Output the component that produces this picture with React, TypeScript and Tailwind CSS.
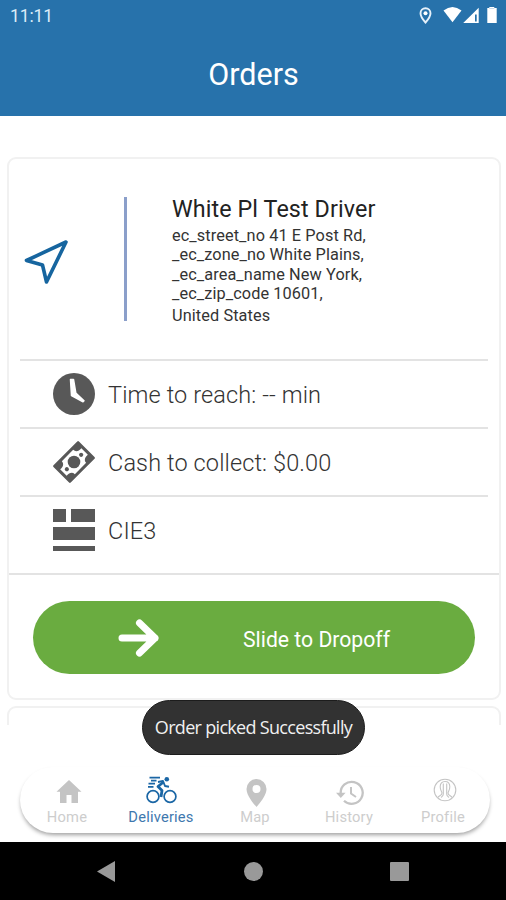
import type { ReactNode } from 'react';

const addressLines = [
  'ec_street_no 41 E Post Rd,',
  '_ec_zone_no White Plains,',
  '_ec_area_name New York,',
  '_ec_zip_code 10601,',
];

function StatusBar() {
  return (
    <div className="flex h-8 items-center justify-between pl-[10px] pr-[8px]">
      <span className="text-[17.5px] leading-8 tracking-[-0.1px] text-[#dcecf8]">11:11</span>
      <svg width="82" height="20" viewBox="0 0 82 20" fill="#fff">
        <path
          d="M9.500 2.200a5 5 0 0 0-5 5c0 3.700 5 9.300 5 9.300s5-5.600 5-9.300a5 5 0 0 0-5-5z"
          fill="none"
          stroke="#e6f1fa"
          strokeWidth="1.900"
        />
        <circle cx="9.500" cy="7.300" r="2" />
        <path d="M27.500 4.400Q36.500-2.600 45.500 4.400L36.500 16.200z" />
        <path fillRule="evenodd" d="M62.700 1.700V17H47.200zM59 8.500v7h1.700v-7z" />
        <path d="M73.300 2.200h5v-1.200h-5zM71.300 2h9.400v15h-9.400z" />
      </svg>
    </div>
  );
}

function ClockIcon() {
  return (
    <svg width="42" height="42" viewBox="0 0 42 42">
      <circle cx="21" cy="21" r="21" fill="#585858" />
      <path d="M17.500 6.500h3l2.300 13.500 8.200 7.800-1 1L18.500 22.700z" fill="#fff" stroke="#fff" strokeWidth="1.500" strokeLinejoin="round" />
    </svg>
  );
}

function CashIcon() {
  return (
    <svg width="42" height="42" viewBox="0 0 42 42">
      <g transform="rotate(-45 21 21)">
        <rect x="3" y="8.800" width="36" height="24.400" rx="1.200" fill="#585858" />
        <path
          d="M13 11.800h16c.2 3.500 3 5 7 4.600v9.200c-4-.4-6.800 1.100-7 4.600H13c-.2-3.500-3-5-7-4.600v-9.200c4 .4 6.800-1.100 7-4.600z"
          fill="#fff"
        />
        <circle cx="21" cy="21" r="6.300" fill="#585858" />
        <circle cx="10.900" cy="21" r="2.100" fill="#585858" />
        <circle cx="31.100" cy="21" r="2.100" fill="#585858" />
      </g>
    </svg>
  );
}

function BlocksIcon() {
  return (
    <svg width="42" height="42" viewBox="0 0 42 42" fill="#585858">
      <path d="M0 0h13v13H0zM18 0h24v13H18zM0 18h42v13H0zM0 37h42v5H0z" />
    </svg>
  );
}

function HomeIcon() {
  return (
    <svg className="ml-[4px]" width="26" height="23" viewBox="0 0 26 23" fill="#c4c4c4">
      <path d="M13 0L25.500 11.800H22V23h-6.500v-8h-5v8H4V11.800H.5z" />
    </svg>
  );
}

function BikeIcon() {
  return (
    <svg className="mb-[3px]" width="31" height="28" viewBox="0 0 31 28" fill="none" stroke="#1a66a5" strokeWidth="1.700">
      <circle cx="7" cy="20.500" r="5.900" />
      <circle cx="24" cy="20.500" r="5.900" />
      <path d="M3.500 1.700H14M5 4.700h5.500M2.500 7.700H9M2 10.800h5.500" />
      <path d="M17.500 6L12 10.500L16 14.500L15 21" strokeWidth="2.800" strokeLinejoin="round" />
      <path d="M12 6L17 5L19 10L23 10.800" strokeWidth="1.900" strokeLinejoin="round" />
      <circle cx="20.800" cy="3.300" r="2.300" fill="#1a66a5" stroke="none" />
    </svg>
  );
}

function MapIcon() {
  return (
    <svg className="ml-[3px] mt-[2px]" width="21" height="28" viewBox="0 0 21 28" fill="#c4c4c4">
      <path
        fillRule="evenodd"
        d="M10.500 0A10 10 0 0 0 .500 10C.5 17.500 10.500 28 10.500 28s10-10.500 10-18a10 10 0 0 0-10-10zm0 6a4 4 0 1 1 0 8 4 4 0 0 1 0-8z"
      />
    </svg>
  );
}

function HistoryIcon() {
  return (
    <svg className="ml-[2px] mt-[2px]" width="28" height="26" viewBox="0 0 28 26" fill="none" stroke="#c4c4c4">
      <path d="M4.700 13.500A11 11 0 1 1 8 20.700" strokeWidth="2.300" />
      <path d="M0 12.700h9.600L4.800 18z" fill="#c4c4c4" stroke="none" />
      <path d="M15 7v6.500l5 3.500" strokeWidth="2" />
    </svg>
  );
}

function ProfileIcon() {
  return (
    <svg className="mb-[4px] ml-[3px]" width="24" height="24" viewBox="0 0 24 24" fill="none" stroke="#c4c4c4" strokeWidth="1.100">
      <circle cx="12" cy="12" r="10.800" />
      <path d="M5 19.500c.6-1.800 4-2 4-4.500 0-1.300-1.800-2.500-1.800-6.200C7.200 5.400 9 3.500 12 3.500s4.800 1.900 4.800 5.300c0 3.700-1.800 4.900-1.800 6.200 0 2.500 3.400 2.700 4 4.500" />
      <path d="M10.300 5.500v10.500c0 2-1.300 2.500-2.300 3.500M13.700 5.500v10.500c0 2 1.300 2.500 2.300 3.500" />
    </svg>
  );
}

function InfoRow({ icon, children }: { icon: ReactNode; children: ReactNode }) {
  return (
    <div className="flex items-center gap-[13px] pl-[33px] text-[23.5px] font-light tracking-[0.120px] text-[#333] last:pb-[10px]">
      {icon}
      <span className="pt-[3px]">{children}</span>
    </div>
  );
}

function Tab({ icon, label, active }: { icon: ReactNode; label: string; active?: boolean }) {
  return (
    <div className={`flex w-[94px] flex-col items-center text-[14.700px] leading-[18px] tracking-[0.2px] ${active ? 'text-[#3e78ae]' : 'text-[#cdcdcd]'}`}>
      <div className="flex h-[41px] items-center justify-center pt-[8px]">{icon}</div>
      <span>{label}</span>
    </div>
  );
}

export default function App() {
  return (
    <div className="relative flex h-[900px] w-[506px] flex-col overflow-hidden bg-white font-['Roboto',sans-serif]">
      <header className="h-[116px] shrink-0 bg-[#2772ab]">
        <StatusBar />
        <h1 className="pt-[23px] text-center text-[30.500px] leading-10 text-white"><span className="ml-[1px]">Orders</span></h1>
      </header>

      {/* Orders list */}
      <main className="h-[609px] shrink-0 overflow-hidden pl-[7px] pr-[5px] pt-[41px]">
        <section className="flex h-[543px] flex-col rounded-[9px] border-2 border-[#f1f1f1]">
          <div className="flex h-[200px] shrink-0 items-start pl-[15px] pt-[38px]">
            <svg className="mt-[42px]" width="46" height="46" viewBox="0 0 46 46" fill="none" stroke="#16659f" strokeWidth="3.600" strokeLinejoin="round">
              <path d="M42 3L2.500 21.500L18.500 26L22.500 43z" />
            </svg>
            <div className="ml-[54px] h-[124px] w-[3px] bg-[#8b9fca]" />
            <div className="ml-[45px] text-[16.300px] leading-[19.300px] tracking-[0.100px] text-[#333]">
              <h2 className="mb-[4px] text-[23.300px] leading-[25px] text-[#222]">White Pl Test Driver</h2>
              {addressLines.map((line) => (
                <p key={line}>{line}</p>
              ))}
              <p className="mt-[3px]">United States</p>
            </div>
          </div>

          <div className="mx-[11px] grid h-[214px] shrink-0 grid-rows-[68px_68px_76px] divide-y-2 divide-[#e3e3e3] border-t-2 border-[#e3e3e3]">
            <InfoRow icon={<ClockIcon />}>Time to reach: -- min</InfoRow>
            <InfoRow icon={<CashIcon />}>Cash to collect: $0.00</InfoRow>
            <InfoRow icon={<BlocksIcon />}>CIE3</InfoRow>
          </div>

          <div className="flex grow items-center justify-center border-t-2 border-[#e3e3e3] pt-[2px]">
            <button className="flex h-[73px] w-[442px] items-center rounded-full bg-[#6aac40] pl-[85px] text-[21.200px] text-white">
              <svg width="42" height="40" viewBox="0 0 42 40" fill="none" stroke="#fff" strokeWidth="7" strokeLinecap="round" strokeLinejoin="round">
                <path d="M4 20H37M21.500 5L37 20L21.500 35" />
              </svg>
              <span className="ml-[83px] whitespace-nowrap pt-[4px]">Slide to Dropoff</span>
            </button>
          </div>
        </section>
        <section className="mt-[6px] h-[100px] rounded-[9px] border-2 border-[#f1f1f1]" />
      </main>

      {/* Bottom tabs */}
      <div className="h-[117px] shrink-0 pl-[20px] pr-[16px] pt-[42px]">
        <nav className="flex h-[66px] rounded-full bg-white shadow-[0_3px_4px_-1px_rgba(0,0,0,0.38)]">
          <Tab icon={<HomeIcon />} label="Home" />
          <Tab icon={<BikeIcon />} label="Deliveries" active />
          <Tab icon={<MapIcon />} label="Map" />
          <Tab icon={<HistoryIcon />} label="History" />
          <Tab icon={<ProfileIcon />} label="Profile" />
        </nav>
      </div>

      {/* Android navigation */}
      <div className="flex grow items-center justify-between bg-black pl-[97px] pr-[97px]">
        <svg width="18" height="21" viewBox="0 0 18 21" fill="#999">
          <path d="M18 0v21L0 10.500z" />
        </svg>
        <div className="ml-[2px] size-[19px] rounded-full bg-[#999]" />
        <div className="size-[19px] rounded-[1px] bg-[#999]" />
      </div>

      {/* Toast */}
      <div className="absolute left-[142px] top-[700px] flex h-[55px] w-[223px] items-center justify-center whitespace-nowrap rounded-full border border-[#1c1c1c] bg-[#323232] font-['Open_Sans',sans-serif] text-[18px] font-medium tracking-[-0.690px] text-[#f0f0f0]">
        Order picked Successfully
      </div>
    </div>
  );
}
